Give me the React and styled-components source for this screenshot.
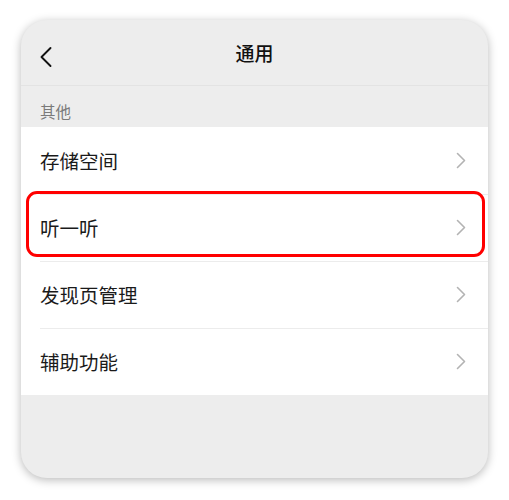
import React from 'react';
import styled, { createGlobalStyle } from 'styled-components';

const GlobalStyle = createGlobalStyle`
  body {
    margin: 0;
    background: #ffffff;
    font-family: "Noto Sans CJK SC", "Noto Sans", sans-serif;
  }
  #root {
    min-height: 500px;
    padding: 20px 0 22px 21px;
    box-sizing: border-box;
  }
`;

const Card = styled.div`
  width: 467px;
  height: 458px;
  border-radius: 26px;
  overflow: hidden;
  background: #ededed;
  box-shadow: 0 2px 10px rgba(0, 0, 0, 0.28);
`;

const Header = styled.header`
  height: 65px;
  display: flex;
  align-items: center;
  justify-content: center;
  position: relative;
  border-bottom: 1px solid #e3e3e3;
  color: #111;
  font-size: 19px;
  font-weight: 500;
`;

const BackButton = styled.div`
  position: absolute;
  left: 18px;
  top: 26px;
  display: flex;
`;

const SectionLabel = styled.div`
  padding: 15px 19px 6px;
  font-size: 15.5px;
  line-height: 20px;
  color: #7a7a7a;
`;

const List = styled.div`
  background: #ffffff;
`;

const Row = styled.div`
  position: relative;
  height: 67px;
  display: flex;
  align-items: center;
  justify-content: space-between;
  padding: 0 22px 0 19px;
  font-size: 19.5px;
  color: #1a1a1a;

  & + &::before {
    content: '';
    position: absolute;
    top: 0;
    left: 19px;
    right: 0;
    height: 1px;
    background: #ececec;
  }
`;

const Highlight = styled.div`
  position: absolute;
  top: -3px;
  left: 5px;
  right: 3px;
  height: 66px;
  box-sizing: border-box;
  border: 3px solid #ff0000;
  border-radius: 11px;
  z-index: 1;
`;

const Chevron = ({ color = '#b3b3b3', w = 10, h = 17, sw = 1.6 }) => (
  <svg width={w} height={h} viewBox="0 0 10 17" fill="none">
    <path d="M1.5 1.5 L8.5 8.5 L1.5 15.5" stroke={color} strokeWidth={sw} strokeLinecap="round" strokeLinejoin="round" />
  </svg>
);

const BackIcon = () => (
  <svg width="14" height="22" viewBox="0 0 14 22" fill="none">
    <path d="M11.5 2 L2.5 11 L11.5 20" stroke="#111" strokeWidth="1.9" strokeLinecap="round" strokeLinejoin="round" />
  </svg>
);

const items = ['存储空间', '听一听', '发现页管理', '辅助功能'];

export default function App() {
  return (
    <>
      <GlobalStyle />
      <Card>
        <Header>
          <BackButton>
            <BackIcon />
          </BackButton>
          通用
        </Header>
        <SectionLabel>其他</SectionLabel>
        <List>
          {items.map((label) => (
            <Row key={label}>
              {label === '听一听' && <Highlight />}
              <span>{label}</span>
              <Chevron />
            </Row>
          ))}
        </List>
      </Card>
    </>
  );
}
